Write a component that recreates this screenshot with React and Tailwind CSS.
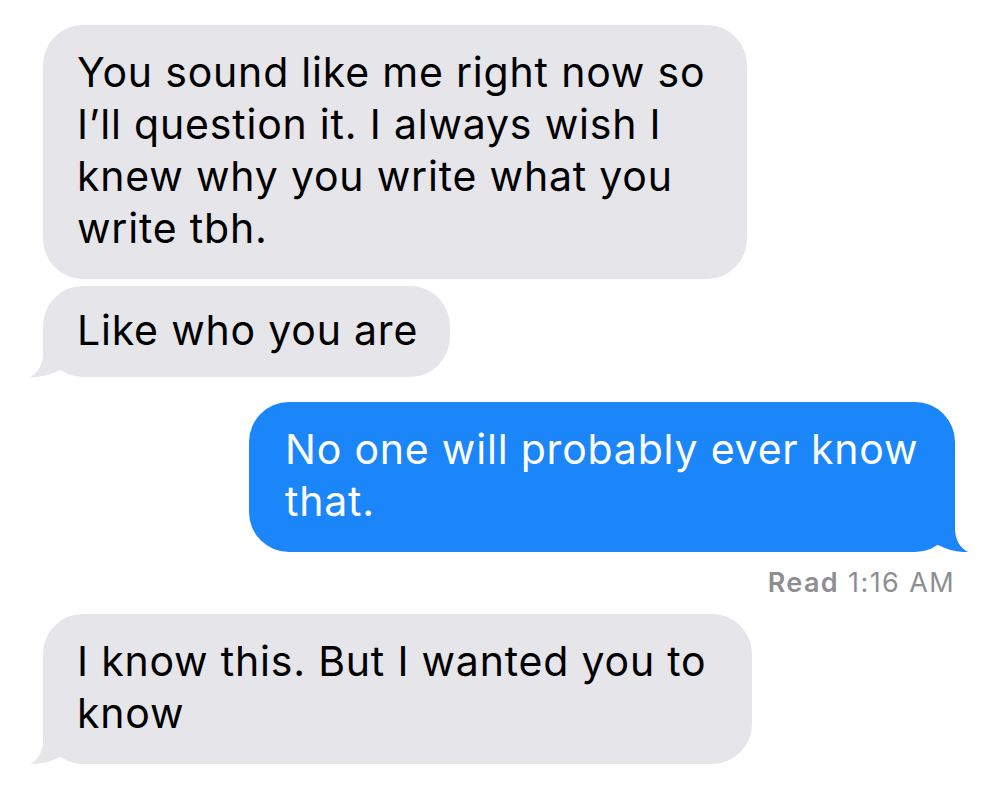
import React from "react";

function Tail({ side, color }) {
  const pos = side === "left" ? "left-[-13px]" : "right-[-13px] -scale-x-100";
  return (
    <svg
      className={`absolute bottom-0 ${pos}`}
      width="40"
      height="40"
      viewBox="0 0 40 40"
    >
      <path d="M13 0 L13 16 C13 28 8 36 0 40 C10 40.5 20 38 30 33 L30 0 Z" fill={color} />
    </svg>
  );
}

function Bubble({ lines, width, mine, tail, pad = "pt-[21px] pb-[25px]", className = "" }) {
  const color = mine ? "#1b86fa" : "#e5e5ea";
  return (
    <div
      className={`relative ${width} rounded-[40px] ${pad} ${
        mine ? "bg-[#1b86fa] text-white pl-[36px] self-end" : "bg-[#e5e5ea] text-black pl-[34px] self-start"
      } ${className}`}
    >
      {tail && <Tail side={mine ? "right" : "left"} color={color} />}
      <p className="relative text-[41px] leading-[52px] tracking-[0.8px] whitespace-nowrap">
        {lines.map((l, i) => (
          <span key={i} className="block">
            {l}
          </span>
        ))}
      </p>
    </div>
  );
}

export default function App() {
  return (
    <div className="min-h-screen bg-white font-['Inter','Noto_Sans',sans-serif]">
      <div className="flex flex-col pt-[25px] pl-[43px] pr-[45px]">
        <Bubble
          width="w-[704px]"
          lines={[
            "You sound like me right now so",
            "I\u2019ll question it. I always wish I",
            "knew why you write what you",
            "write tbh.",
          ]}
        />
        <Bubble
          width="w-[407px]"
          tail
          pad="pt-[18px] pb-[21px]"
          className="mt-[7px]"
          lines={["Like who you are"]}
        />
        <Bubble
          width="w-[706px]"
          mine
          tail
          className="mt-[25px]"
          lines={["No one will probably ever know", "that."]}
        />
        <p className="self-end mt-[16px] text-[27px] leading-[30px] tracking-[1.4px] text-[#8e8e93]">
          <span className="font-semibold">Read</span> 1:16 AM
        </p>
        <Bubble
          width="w-[709px]"
          tail
          className="mt-[16px]"
          lines={["I know this. But I wanted you to", "know"]}
        />
      </div>
    </div>
  );
}
